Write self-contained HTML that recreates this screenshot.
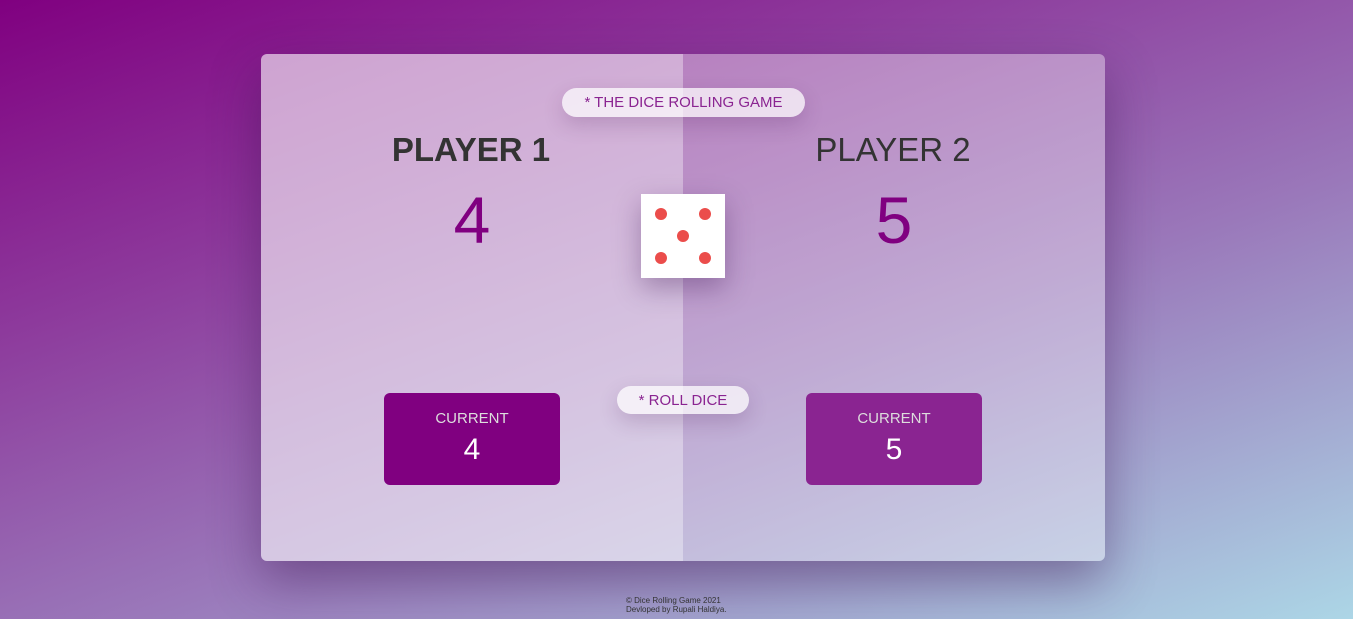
<!DOCTYPE html>
<html><head><meta charset="utf-8"><style>
*{margin:0;padding:0;box-sizing:border-box}
body{width:1353px;height:619px;overflow:hidden;font-family:"Liberation Sans",sans-serif;
background:linear-gradient(160deg,#800080 0%,#8d3a9c 30%,#9a78ba 60%,#acd6e6 100%);position:relative}
.card{position:absolute;left:261px;top:54px;width:844px;height:507px;border-radius:6px;overflow:hidden;box-shadow:0 20px 50px rgba(60,20,80,.45);display:flex}
.p{width:50%;height:100%;position:relative;text-align:center}
.p1{background:rgba(255,255,255,.6)}
.p2{background:rgba(255,255,255,.38)}
.name{position:absolute;top:77px;width:100%;font-size:33px;color:#333}
.p1 .name{font-weight:bold;left:-1px}
.p2 .name{left:-1px}
.score{position:absolute;top:128px;width:100%;font-size:66px;color:#800080}
.cur{position:absolute;top:339px;width:176px;height:92px;border-radius:6px;color:#fff}
.p1 .cur{left:123px;background:#800080}
.p2 .cur{left:123px;background:#8a2491}
.cur .l{margin-top:17px;font-size:15px;color:#ddd}
.cur .v{margin-top:6px;font-size:30px}
.pill{position:absolute;background:rgba(255,255,255,.72);border-radius:16px;color:#8a2491;font-size:15px;text-align:center;box-shadow:0 8px 20px rgba(80,30,90,.2)}
.dice{position:absolute;left:641px;top:194px;width:84px;height:84px;background:#fff;box-shadow:0 10px 25px rgba(60,20,80,.35)}
.d{position:absolute;width:12px;height:12px;border-radius:50%;background:#eb4d4b}
.foot{position:absolute;left:626px;top:596px;font-size:8px;color:#333;line-height:9px}
</style></head><body>
<div class="card">
<div class="p p1"><div class="name">PLAYER 1</div><div class="score">4</div><div class="cur"><div class="l">CURRENT</div><div class="v">4</div></div></div>
<div class="p p2"><div class="name">PLAYER 2</div><div class="score">5</div><div class="cur"><div class="l">CURRENT</div><div class="v">5</div></div></div>
</div>
<div class="pill" style="left:562px;top:88px;width:243px;height:29px;line-height:30px">* THE DICE ROLLING GAME</div>
<div class="pill" style="left:617px;top:386px;width:132px;height:28px;line-height:30px">* ROLL DICE</div>
<div class="dice">
<div class="d" style="left:14px;top:14px"></div><div class="d" style="left:58px;top:14px"></div>
<div class="d" style="left:36px;top:36px"></div>
<div class="d" style="left:14px;top:58px"></div><div class="d" style="left:58px;top:58px"></div>
</div>
<div class="foot">© Dice Rolling Game 2021<br>Devloped by Rupali Haldiya.</div>
</body></html>
